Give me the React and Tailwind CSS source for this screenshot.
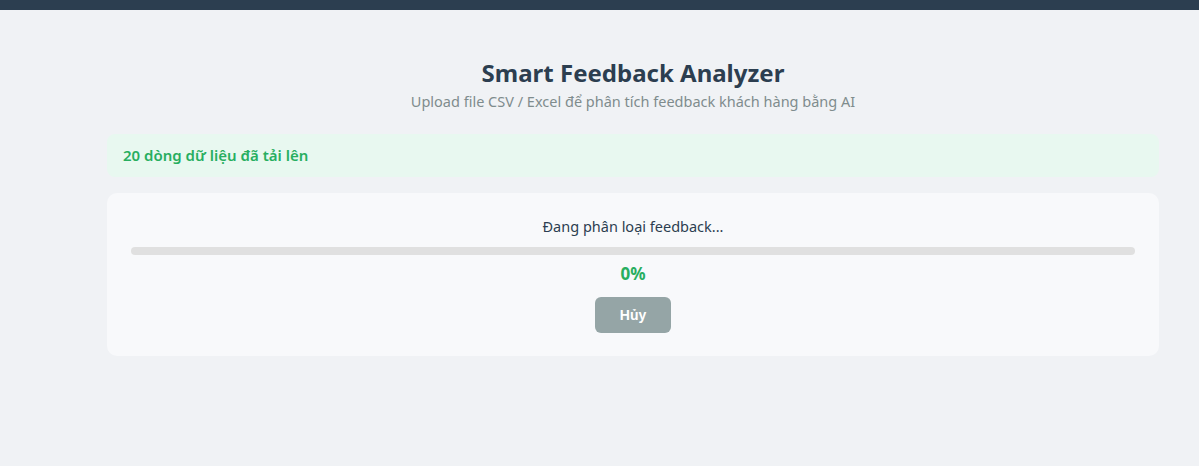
import React from 'react';

const App = () => {
  return (
    <div className="min-h-[466px] bg-[#f0f2f5] font-['Noto_Sans',sans-serif] text-[#2c3e50]">
      {/* top bar */}
      <div className="h-[10px] bg-[#2c3e50]" />

      <div className="pl-[107px] pr-[40px] pt-[46px]">
        <div className="text-center">
          <h1 className="text-[24px] font-bold leading-[34px]">Smart Feedback Analyzer</h1>
          <p className="mt-[1px] text-[14.5px] leading-[20px] text-[#7f8c8d]">
            Upload file CSV / Excel để phân tích feedback khách hàng bằng AI
          </p>
        </div>

        <div className="mt-[23px] flex h-[43px] items-center rounded-lg bg-[#e8f8f0] px-4 text-[15px] font-semibold text-[#27ae60]">
          20 dòng dữ liệu đã tải lên
        </div>

        <div className="mt-4 flex flex-col items-center rounded-[10px] bg-[#f8f9fb] px-6 pb-[23px] pt-[23px]">
          <p className="text-[14.5px] leading-[20px]">Đang phân loại feedback...</p>
          <div className="mt-[11px] h-2 w-full rounded-full bg-[#e0e0e0]">
            <div className="h-2 rounded-full bg-[#27ae60]" style={{ width: '0%' }} />
          </div>
          <p className="mt-[7px] text-[17px] font-bold leading-[24px] text-[#27ae60]">0%</p>
          <button className="mt-[11px] h-9 w-[76px] rounded-md bg-[#95a5a6] font-['Liberation_Sans',sans-serif] text-[14px] font-bold text-white">
            Hủy
          </button>
        </div>
      </div>
    </div>
  );
};

export default App;
